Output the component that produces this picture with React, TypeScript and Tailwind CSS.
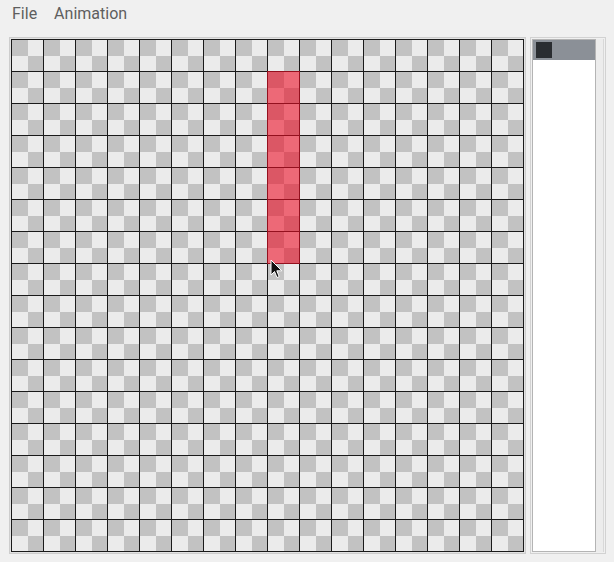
import React from 'react';

const N = 16;

function Cell() {
  return (
    <div className="grid h-[32px] w-[32px] grid-cols-[16px_15px] grid-rows-[16px_15px] border-b border-r border-[#1a1a1a]">
      <div className="bg-[#c2c2c2]" />
      <div className="bg-[#ebebeb]" />
      <div className="bg-[#ebebeb]" />
      <div className="bg-[#c2c2c2]" />
    </div>
  );
}

function Cursor() {
  return (
    <svg
      className="pointer-events-none absolute left-[258px] top-[219px]"
      width="14"
      height="20"
      viewBox="0 0 14 20"
    >
      <path
        d="M1 1 L1 16 L4.5 12.5 L7 18.5 L9.2 17.6 L6.8 11.8 L11.8 11.8 Z"
        fill="#111"
        stroke="#fff"
        strokeWidth="1"
        strokeLinejoin="round"
      />
    </svg>
  );
}

function Canvas() {
  const cells = Array.from({ length: N * N });
  return (
    <div className="border border-[#cdcdcd] bg-[#e2e2e2] p-px">
      <div className="relative grid grid-cols-[repeat(16,32px)] border-l border-t border-[#1a1a1a]">
        {cells.map((_, i) => (
          <Cell key={i} />
        ))}
        {/* painted pixels */}
        <div className="absolute left-[255px] top-[31px] h-[193px] w-[33px] bg-[rgba(237,10,35,0.58)]" />
        <Cursor />
      </div>
    </div>
  );
}

function FramesPanel() {
  return (
    <div className="flex h-[517px] w-[76px] border border-[#d2d2d2] bg-[#f0f0f0] p-px">
      <div className="flex w-[64px] flex-col border border-[#b4b4b4] bg-white">
        <div className="flex h-[20px] items-center bg-[#8b9097] pl-[3px]">
          <div className="h-[16px] w-[16px] bg-[#2a2d31]" />
        </div>
      </div>
      <div className="flex-1 border-r border-[#d8d8d8] bg-[#ececec]" />
    </div>
  );
}

export default function App() {
  return (
    <div className="h-[562px] w-[614px] overflow-hidden bg-[#f0f0f0] font-['Roboto','Liberation_Sans',sans-serif]">
      <div className="flex h-[37px] gap-[17px] pl-[12px] pt-[3px] text-[16px] leading-[22px] text-[#5e5e5e]">
        <span>File</span>
        <span>Animation</span>
      </div>
      <div className="flex gap-[4px] pl-[9px]">
        <Canvas />
        <FramesPanel />
      </div>
    </div>
  );
}
